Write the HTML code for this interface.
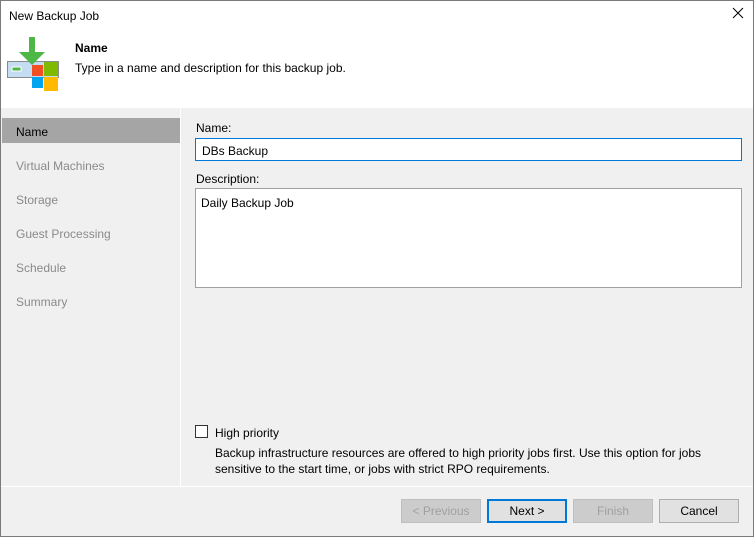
<!DOCTYPE html>
<html><head><meta charset="utf-8"><style>
*{margin:0;padding:0;box-sizing:border-box}
body{width:754px;height:537px;overflow:hidden;font-family:"Liberation Sans",sans-serif;font-size:12px;color:#000;background:#f0f0f0;position:relative}
.abs{position:absolute}
.title{left:0;top:0;width:754px;height:108px;background:#fff}
.left{left:0;top:108px;width:181px;height:378px;background:#f0f0f0;border-right:1px solid #fff}
.nav{position:absolute;left:16px;font-size:12px;color:#8a8a8a}
.btn{position:absolute;top:499px;height:24px;width:80px;border:1px solid #adadad;background:#e1e1e1;text-align:center;line-height:22px;font-size:12px}
.dis{color:#a0a0a0;background:#cccccc;border-color:#bfbfbf}
.frame{left:0;top:0;width:754px;height:537px;border:1px solid #7a7a7a}
</style></head><body>
<div class="abs title"></div>
<div class="abs" style="left:9px;top:9px;font-size:12px">New Backup Job</div>
<svg class="abs" style="left:731px;top:6px" width="14" height="14"><path d="M2 2L12 12M12 2L2 12" stroke="#000" stroke-width="1"/></svg>
<svg class="abs" style="left:0;top:30px" width="70" height="64">
<rect x="7.5" y="31.5" width="51" height="16" fill="#c5ddf2" stroke="#8a8a8a"/>
<rect x="12" y="37" width="9" height="4" fill="#4db848" stroke="#fff"/>
<rect x="32" y="35" width="11" height="11" fill="#f25022"/>
<rect x="44" y="32" width="14" height="14" fill="#7fba00"/>
<rect x="32" y="47" width="11" height="11" fill="#00a4ef"/>
<rect x="44" y="47" width="14" height="14" fill="#ffb900"/>
<path d="M29 7h6v15h10l-13 13-13-13h10z" fill="#4db848"/>
</svg>
<div class="abs" style="left:75px;top:41px;font-weight:bold">Name</div>
<div class="abs" style="left:75px;top:61px">Type in a name and description for this backup job.</div>
<div class="abs left"></div>
<div class="abs" style="left:2px;top:118px;width:178px;height:25px;background:#a5a5a5"></div>
<div class="nav" style="top:125px;color:#000">Name</div>
<div class="nav" style="top:159px">Virtual Machines</div>
<div class="nav" style="top:193px">Storage</div>
<div class="nav" style="top:227px">Guest Processing</div>
<div class="nav" style="top:261px">Schedule</div>
<div class="nav" style="top:295px">Summary</div>
<div class="abs" style="left:196px;top:121px">Name:</div>
<div class="abs" style="left:195px;top:138px;width:547px;height:23px;background:#fff;border:1px solid #0078d7;padding:5px 6px">DBs Backup</div>
<div class="abs" style="left:196px;top:172px">Description:</div>
<div class="abs" style="left:195px;top:188px;width:547px;height:100px;background:#fff;border:1px solid #a0a0a0;padding:7px 5px">Daily Backup Job</div>
<div class="abs" style="left:195px;top:425px;width:13px;height:13px;border:1px solid #333;background:#fff"></div>
<div class="abs" style="left:215px;top:426px">High priority</div>
<div class="abs" style="left:215px;top:445px;line-height:16px;width:520px">Backup infrastructure resources are offered to high priority jobs first. Use this option for jobs sensitive to the start time, or jobs with strict RPO requirements.</div>
<div class="abs" style="left:0;top:486px;width:754px;height:1px;background:#fff"></div>
<div class="btn dis" style="left:401px">&lt; Previous</div>
<div class="btn" style="left:487px;border:2px solid #0078d7;line-height:20px">Next &gt;</div>
<div class="btn dis" style="left:573px">Finish</div>
<div class="btn" style="left:659px">Cancel</div>
<div class="abs frame"></div>
</body></html>
